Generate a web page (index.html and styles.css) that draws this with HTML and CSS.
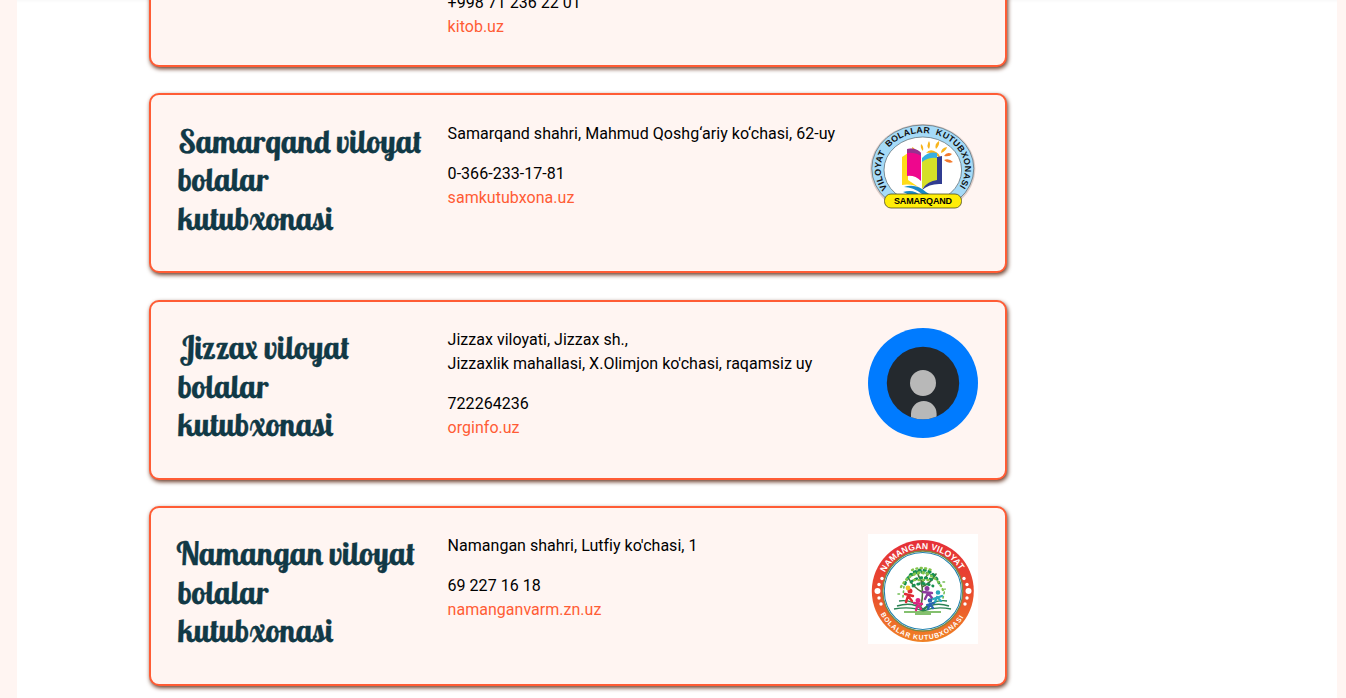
FILE: index.html
```html
<!DOCTYPE html>
<html lang="uz">
<head>
<meta charset="utf-8">
<title>Kutubxonalar</title>
<link rel="stylesheet" href="styles.css">
</head>
<body>
<main class="page">
  <section class="list">
    <article class="card card-cut">
      <h2 class="name"></h2>
      <div class="info"><p>+998 71 236 22 01<br><a>kitob.uz</a></p></div>
    </article>

    <article class="card">
      <h2 class="name"><span>Samarqand viloyat</span><span>bolalar</span><span>kutubxonasi</span></h2>
      <div class="info wide"><p>Samarqand shahri, Mahmud Qoshg‘ariy ko‘chasi, 62-uy</p><p>0-366-233-17-81<br><a>samkutubxona.uz</a></p></div>
      <svg class="logo" viewBox="0 -1 110 110">
        <defs>
          <path id="samArc" d="M19.500 66.500 A42 36 0 1 1 90.100 66.500"/>
          <clipPath id="abovePlate"><rect width="110" height="80"/></clipPath>
        </defs>
        <g clip-path="url(#abovePlate)">
          <ellipse class="halo" cx="54.800" cy="47" rx="52.500" ry="45"/>
          <ellipse cx="54.800" cy="46.500" rx="51" ry="43.500" fill="#a5daf7" stroke="#59666c" stroke-width=".7"/>
          <ellipse cx="54.800" cy="48" rx="38.800" ry="33" fill="#fff" stroke="#59666c" stroke-width=".7"/>
        </g>
        <text class="ring sam-ring"><textPath href="#samArc" textLength="162">VILOYAT&#160; BOLALAR&#160; KUTUBXONASI</textPath></text>
        <g fill="#f8b51d">
          <path d="M55 29q1-5-2-7q-1 4 2 7zM61 27q2-5 0-8q-3 5 0 8zM68 27q4-4 3-8q-5 3-3 8zM73 31q5-2 6-6q-6 1-6 6z"/>
          <path d="M58 31q4-5 10-1q4 2 4 6q-7-6-14-5z"/>
          <path d="M76 34q6 1 8-2q-5-3-8 2zM76 38q4 4 9 2q-4-4-9-2z" fill="#f4792b"/>
          <path d="M48 30q-1-4-4-5q0 4 4 5z"/>
        </g>
        <path d="M34 35l6-4v27l15 10q-10-7-21-5z" fill="#ffdc19"/>
        <path d="M39 27q9-1 14 4v28q-6-6-14-5z" fill="#ee078d"/>
        <path d="M39 27q9-2 14 4v3q-6-4-14-3z" fill="#96308f"/>
        <path d="M54 36q7-7 15-5v22q-9 1-15 10z" fill="#36aee2"/>
        <path d="M69 35l5-1v28q-12-1-20 6q4-9 15-12z" fill="#303c91"/>
        <path d="M54 40q7-5 15-4v22q-9 1-15 9z" fill="#d5df28"/>
        <path d="M36 65q12-4 22 5q7 5 13 3q-8 5-17-1q-9-7-18-7zM35 70q11-3 18 4H41q-2-3-6-4z" fill="#1889c8"/>
        <rect x="16.500" y="72" width="77" height="14" rx="6.500" fill="#ffed08" stroke="#4d4d22" stroke-width=".8"/>
        <text class="plate" x="55" y="82.300" textLength="58">SAMARQAND</text>
      </svg>
    </article>

    <article class="card">
      <h2 class="name"><span>Jizzax viloyat</span><span>bolalar</span><span>kutubxonasi</span></h2>
      <div class="info"><p>Jizzax viloyati, Jizzax sh.,<br>Jizzaxlik mahallasi, X.Olimjon ko'chasi, raqamsiz uy</p><p>722264236<br><a>orginfo.uz</a></p></div>
      <svg class="logo" viewBox="0 0 110 110">
        <clipPath id="person"><circle cx="55" cy="55" r="36.200"/></clipPath>
        <circle cx="55" cy="55" r="55" fill="#007bff"/>
        <circle cx="55" cy="55" r="36.200" fill="#24292e"/>
        <circle cx="55" cy="55" r="13" fill="#b8b8b8"/>
        <path clip-path="url(#person)" d="M43 95V85.800a12.800 12.800 0 0 1 25.600 0v10z" fill="#b8b8b8"/>
      </svg>
    </article>

    <article class="card">
      <h2 class="name"><span class="loose">Namangan viloyat</span><span>bolalar</span><span>kutubxonasi</span></h2>
      <div class="info"><p>Namangan shahri, Lutfiy ko'chasi, 1</p><p>69 227 16 18<br><a>namanganvarm.zn.uz</a></p></div>
      <svg class="logo" viewBox="0 0 110 110">
        <defs>
          <linearGradient id="red" x2="0" y2="1"><stop offset="0" stop-color="#e52f38"/><stop offset=".5" stop-color="#e94b2e"/><stop offset="1" stop-color="#f08225"/></linearGradient>
          <path id="namTop" d="M17 38.500 A42.500 42.500 0 0 1 93 38.500"/>
          <path id="namBottom" d="M12.500 80 A48 48 0 0 0 97.500 80"/>
        </defs>
        <rect width="110" height="110" fill="#fff"/>
        <circle cx="54.800" cy="57" r="51" fill="url(#red)"/>
        <circle cx="54.800" cy="57" r="40" fill="#fff" stroke="#7d8742" stroke-width="1.300"/>
        <circle cx="54.800" cy="57" r="38.500" fill="#fff" stroke="#2182ad" stroke-width="1.100"/>
        <text class="ring nam-ring"><textPath href="#namTop" textLength="91">NAMANGAN VILOYAT</textPath></text>
        <text class="ring nam-low"><textPath href="#namBottom" textLength="100">BOLALAR KUTUBXONASI</textPath></text>
        <g fill="#fff"><circle cx="9.500" cy="57" r="3"/><circle cx="11" cy="50.500" r="1.700"/><circle cx="14" cy="44.500" r="1.700"/><circle cx="11" cy="64" r="1.700"/><circle cx="13" cy="70" r="1.700"/><circle cx="100.500" cy="57" r="3"/><circle cx="99" cy="50.500" r="1.700"/><circle cx="96" cy="44.500" r="1.700"/><circle cx="99" cy="64" r="1.700"/><circle cx="97" cy="70" r="1.700"/></g>
        <g fill="none" stroke-linecap="round">
          <path d="M53 72q3-15 0-24m1 10q-9-5-13-13m13 8q9-4 14-13m-14 8q-4-6-5-11m5 12q5-8 7-10" stroke="#49753b" stroke-width="1.600"/>
          <path d="M37 50q4-12 15-14q13-1 19 13M40 44q12-11 26-1M43 48q10-8 24-1M45 52q9-5 20 0" stroke="#169051" stroke-width="2.800" stroke-dasharray="1.500 3.600"/>
          <path d="M33 53q7-13 20-14q15 1 22 17M46 40q9-4 16 1M46 46h18M44 36q9-4 19 0" stroke="#82c34b" stroke-width="2.400" stroke-dasharray="1 3.500"/>
          <path d="M35 63l1-11m39 12l2-9M30 60h3m42-12h3" stroke="#71bd55" stroke-width="1.600" stroke-dasharray="1.500 3"/>
        </g>
        <g fill="none" stroke="#298253" stroke-width="1.400"><path d="M29 72q16-5 26 4q11-9 26-4M31 67q13-2 24 8q12-10 24-8M26 75q17-3 29 2q13-5 28-2"/><path d="M36 78h37M47 80h16" stroke="#5cac3f"/></g>
        <g stroke="#df2933" fill="#df2933" stroke-width="2.400" stroke-linecap="round"><path d="M37 60l8 2m-5 0l-2 6m2-6l4 5"/><circle cx="42" cy="57" r="1.300"/></g>
        <g stroke="#8b3b9d" fill="#8b3b9d" stroke-width="2.400" stroke-linecap="round"><path d="M55 58l9 1m-4 0l-3 6m3-6l4 5"/><circle cx="59" cy="54.500" r="1.300"/></g>
        <g stroke="#29a9bd" fill="#29a9bd" stroke-width="2.200" stroke-linecap="round"><path d="M65 65l9-3m-5 1l-2 5m2-5l4 4"/><circle cx="70" cy="58.500" r="1.200"/></g>
        <g stroke="#dc2480" fill="#dc2480" stroke-width="2.400" stroke-linecap="round"><path d="M46 69l8 1m-4 0l-2 6m2-6l3 5"/><circle cx="50" cy="66.500" r="1.300"/></g>
        <g stroke="#2a65b3" fill="#2a65b3" stroke-width="2.200" stroke-linecap="round"><path d="M59 71l7-2m-4 1l-2 5m2-5l3 4"/><circle cx="62" cy="66.500" r="1.200"/></g>
        <circle cx="40" cy="54" r="2.400" fill="#efc226"/>
      </svg>
    </article>
  </section>
</main>
</body>
</html>
```
FILE: styles.css
```css
* { box-sizing: border-box; }
body {
  margin: 0;
  padding: 0 9px 0 17px;
  height: 698px;
  overflow: hidden;
  background: #fff5f2;
  font: 16px/24px Roboto, "Liberation Sans", sans-serif;
  color: #000;
}
.page {
  height: 698px;
  overflow: hidden;
  padding-left: 132px;
  background: linear-gradient(#f9f9f9, #fff 3px);
}
.list {
  display: flex;
  flex-direction: column;
  gap: 26.2px;
  width: 858px;
  margin-top: -112.8px;
}
.card {
  display: grid;
  grid-template-columns: 270.6px 1fr 110px;
  flex: none;
  height: 180px;
  padding: 26px 27px 26px 26px;
  border: 2px solid #ff5c35;
  border-radius: 10px;
  background: #fff5f2;
  box-shadow: 1px 2px 4px #6b3d2a;
}
.card-cut { padding-top: 101.6px; }
.name {
  margin: 0;
  padding: .6px 0 0 .8px;
  font: 400 32px/38.4px Lobster, "Liberation Serif", serif;
  color: #113946;
  white-space: nowrap;
}
.name span {
  display: block;
  transform: skewX(10deg);
  transform-origin: 0 60%;
  -webkit-text-stroke: .3px #113946;
}
.name .loose { transform: scaleX(1.01) skewX(10deg); }
.info { padding-top: .3px; letter-spacing: .02px; }
.wide { letter-spacing: .04px; }
.info p { margin: 0 0 16px; white-space: nowrap; }
.info a { color: #ff5c35; }
.logo { display: block; width: 110px; height: 110px; }
.halo { fill: #8f6f68; opacity: .3; }
.ring { font-family: "Liberation Sans", sans-serif; font-weight: bold; letter-spacing: 0; }
.sam-ring { font-size: 8.8px; fill: #111; }
.nam-ring { font-size: 8.6px; fill: #fff; }
.nam-low { font-size: 6.8px; fill: #fff; }
.plate {
  font: bold 9px "Liberation Sans", sans-serif;
  text-anchor: middle;
}
```
